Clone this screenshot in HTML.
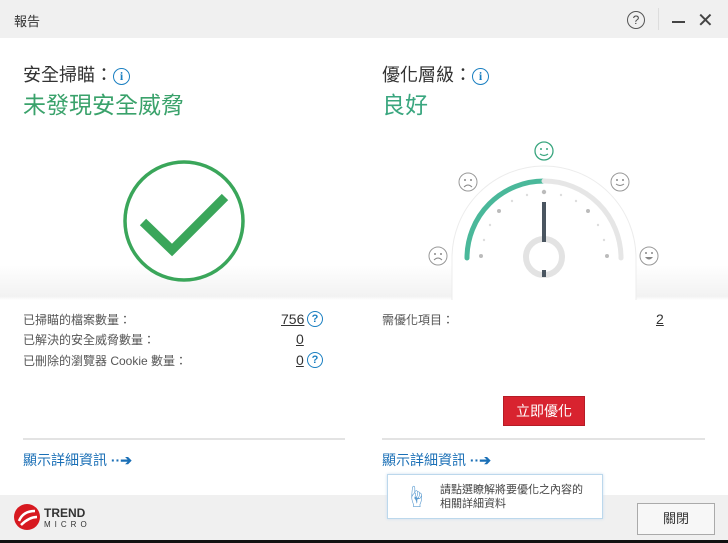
<!DOCTYPE html><html><head><meta charset="utf-8"><style>
body{margin:0;width:728px;height:543px;position:relative;background:#fff;font-family:"Liberation Sans","Noto Sans CJK TC",sans-serif;overflow:hidden;color:#333}
.a{position:absolute;white-space:nowrap}
.s{font-size:12px;color:#555}
.u{text-decoration:underline;font-size:14px;color:#333}
.q{display:inline-block;width:14px;height:14px;border:1.5px solid #1a7fc1;border-radius:50%;color:#1a7fc1;font-size:11px;line-height:14px;text-align:center;font-weight:bold;vertical-align:middle}
.lk{color:#1a6fb6;font-size:14px}
</style></head><body>
<div class="a" style="left:0;top:0;width:728px;height:38px;background:#f0f0f0"></div>
<div class="a" style="left:14px;top:11px;font-size:13px;color:#333">報告</div>
<div class="a" style="left:627px;top:11px;width:16px;height:16px;border:1.2px solid #555;border-radius:50%;font-size:12px;line-height:16px;text-align:center;color:#444">?</div>
<div class="a" style="left:658px;top:8px;width:1px;height:22px;background:#ddd"></div>
<div class="a" style="left:672px;top:21px;width:13px;height:2px;background:#444"></div>
<div class="a" style="left:697px;top:8px;font-size:20px;color:#444">✕</div>

<div class="a" style="left:23px;top:61px;font-size:18px;color:#333">安全掃瞄：<span class="q" style="width:15px;height:15px;font-size:12px;font-family:'Liberation Serif',serif">i</span></div>
<div class="a" style="left:23px;top:86px;font-size:23px;color:#3aa26b">未發現安全威脅</div>
<div class="a" style="left:382px;top:61px;font-size:18px;color:#333">優化層級：<span class="q" style="width:15px;height:15px;font-size:12px;font-family:'Liberation Serif',serif">i</span></div>
<div class="a" style="left:382px;top:86px;font-size:23px;color:#3aa67f">良好</div>

<div class="a" style="left:0;top:265px;width:728px;height:35px;background:linear-gradient(#fff,#f2f2f2 90%,#fff)"></div>
<svg class="a" style="left:0;top:0" width="728" height="310">
<circle cx="184" cy="221" r="59" fill="#fff" stroke="#3aa65a" stroke-width="3.5"/>
<path d="M143 222 L172 250 L225 197" fill="none" stroke="#3aa65a" stroke-width="9"/>
<path d="M452 300 L452 258 A92 92 0 0 1 636 258 L636 300 Z" fill="#fff"/>
<path d="M452 300 L452 258 A92 92 0 0 1 636 258 L636 300" fill="none" stroke="#ececec"/>
<path d="M467 258 A77 77 0 0 1 544 181" fill="none" stroke="#4ab89a" stroke-width="5" stroke-linecap="round"/>
<path d="M544 181 A77 77 0 0 1 621 258" fill="none" stroke="#e6e6e6" stroke-width="5" stroke-linecap="round"/>
<g fill="#bbb"><circle cx="481" cy="256" r="2"/><circle cx="499" cy="211" r="2"/><circle cx="544" cy="192" r="2.2"/><circle cx="588" cy="211" r="2"/><circle cx="607" cy="256" r="2"/></g>
<g fill="#ddd"><circle cx="484" cy="240" r="1.2"/><circle cx="490" cy="225" r="1.2"/><circle cx="512" cy="201" r="1.2"/><circle cx="527" cy="195" r="1.2"/><circle cx="561" cy="195" r="1.2"/><circle cx="576" cy="201" r="1.2"/><circle cx="598" cy="225" r="1.2"/><circle cx="604" cy="240" r="1.2"/></g>
<circle cx="544" cy="257" r="18" fill="#fff" stroke="#e3e3e3" stroke-width="6"/>
<rect x="542" y="202" width="4" height="40" fill="#4a5560"/>
<rect x="542" y="270" width="4" height="7" fill="#4a5560"/>
<g fill="#fff" stroke="#999" stroke-width="1"><circle cx="468" cy="182" r="9"/><circle cx="620" cy="182" r="9"/><circle cx="438" cy="256" r="9"/><circle cx="649" cy="256" r="9"/></g>
<circle cx="544" cy="151" r="9" fill="#fff" stroke="#3aa67f" stroke-width="1.3"/>
<g fill="#888"><circle cx="465" cy="180" r="1"/><circle cx="471" cy="180" r="1"/><circle cx="617" cy="180" r="1"/><circle cx="623" cy="180" r="1"/><circle cx="435" cy="254" r="1"/><circle cx="441" cy="254" r="1"/><circle cx="646" cy="253" r="1"/><circle cx="652" cy="253" r="1"/></g>
<circle cx="541" cy="149" r="1" fill="#3aa67f"/><circle cx="547" cy="149" r="1" fill="#3aa67f"/>
<path d="M540 154 Q544 157 548 154" fill="none" stroke="#3aa67f" stroke-width="1.2"/>
<path d="M464 187 Q468 183 472 187" fill="none" stroke="#888"/>
<path d="M616 184 Q620 187 624 184" fill="none" stroke="#888"/>
<path d="M434 260 Q438 256 442 260" fill="none" stroke="#888"/>
<path d="M645 257 Q649 262 653 257 Z" fill="#888"/>
</svg>

<div class="a s" style="left:23px;top:311px">已掃瞄的檔案數量：</div>
<div class="a u" style="left:281px;top:311px">756</div><span class="a q" style="left:307px;top:311px">?</span>
<div class="a s" style="left:23px;top:331px">已解決的安全威脅數量：</div>
<div class="a u" style="left:296px;top:331px">0</div>
<div class="a s" style="left:23px;top:352px">已刪除的瀏覽器 Cookie 數量：</div>
<div class="a u" style="left:296px;top:352px">0</div><span class="a q" style="left:307px;top:352px">?</span>
<div class="a s" style="left:382px;top:311px">需優化項目：</div>
<div class="a u" style="left:656px;top:311px">2</div>

<div class="a" style="left:503px;top:396px;width:80px;height:28px;background:#d8232f;border:1px solid #b51c26;color:#fff;font-size:14px;line-height:28px;text-align:center">立即優化</div>
<div class="a" style="left:23px;top:438px;width:322px;height:2px;background:#e3e3e3"></div>
<div class="a" style="left:382px;top:438px;width:323px;height:2px;background:#e3e3e3"></div>
<div class="a lk" style="left:23px;top:450px">顯示詳細資訊 <b>··➔</b></div>
<div class="a lk" style="left:382px;top:450px">顯示詳細資訊 <b>··➔</b></div>

<div class="a" style="left:0;top:495px;width:728px;height:45px;background:#f0f0f0"></div>
<div class="a" style="left:0;top:540px;width:728px;height:3px;background:#111"></div>
<div class="a" style="left:387px;top:474px;width:214px;height:43px;background:#fff;border:1px solid #bcd8ec;box-shadow:0 0 3px #cde"></div>
<div class="a" style="left:405px;top:480px;font-size:22px;color:#5a9bd0">☝</div>
<div class="a" style="left:440px;top:483px;font-size:11px;line-height:14px;color:#444">請點選瞭解將要優化之內容的<br>相關詳細資料</div>
<svg class="a" style="left:13px;top:503px" width="28" height="28"><circle cx="14" cy="14" r="13" fill="#d71920"/><path d="M6 18 Q10 8 22 8 M8 22 Q16 14 24 14" stroke="#fff" stroke-width="2.5" fill="none"/></svg>
<div class="a" style="left:44px;top:508px;font-size:12px;font-weight:bold;color:#333;line-height:10px">TREND<br><span style="font-size:8px;letter-spacing:4px;font-weight:normal">MICRO</span></div>
<div class="a" style="left:637px;top:503px;width:76px;height:30px;background:#f7f7f7;border:1px solid #aaa;font-size:13px;line-height:30px;text-align:center">關閉</div>
</body></html>
